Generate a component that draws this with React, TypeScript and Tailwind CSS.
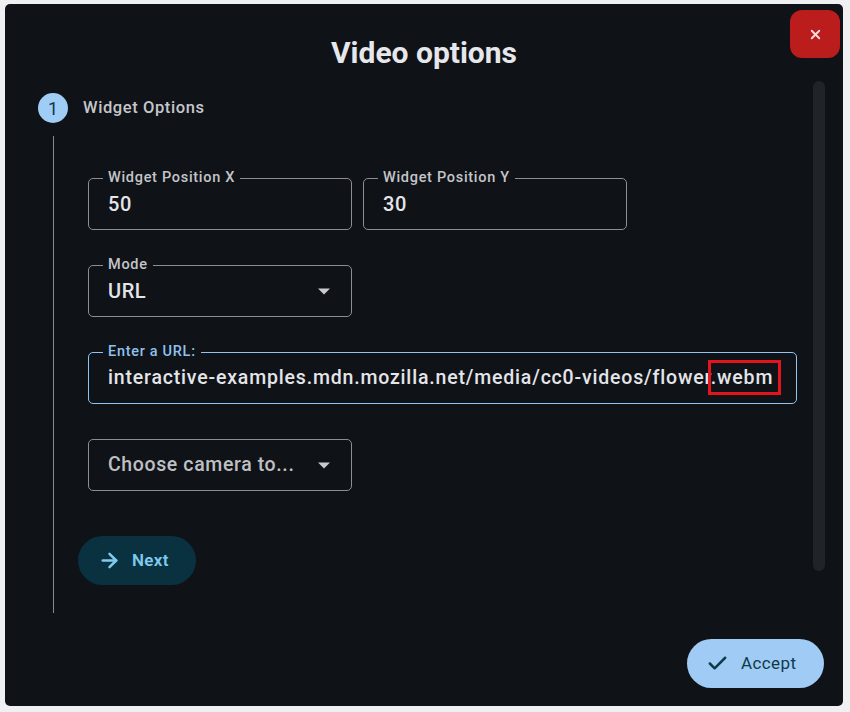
import React from 'react';
import { ArrowRight, Check, X } from 'lucide-react';

const font = { fontFamily: 'Roboto, "Liberation Sans", sans-serif' };

const Caret: React.FC = () => (
  <svg width="14" height="7" viewBox="0 0 14 7" className="shrink-0">
    <path d="M1 0.5 L13 0.5 L7 6.5 Z" fill="#c9cacd" />
  </svg>
);

const OutlinedField: React.FC<{
  label?: string;
  width: string;
  focused?: boolean;
  children: React.ReactNode;
}> = ({ label, width, focused = false, children }) => (
  <div
    className={`relative h-[52px] ${width} rounded-[5px] border flex items-center pl-[19px] pr-[20px] ${
      focused ? 'border-[#90c3f0] border-[1.5px]' : 'border-[#8d8e92]'
    }`}
  >
    {label && (
      <span
        className={`absolute -top-[10px] left-[14px] px-[5px] bg-[#0f1217] text-[14.5px] leading-[18px] font-medium tracking-[0.7px] ${
          focused ? 'text-[#8fc1ee]' : 'text-[#c4c5c9]'
        }`}
      >
        {label}
      </span>
    )}
    {children}
  </div>
);

export default function App() {
  return (
    <div className="w-[850px] h-[712px] bg-[#eff0f2] pl-[5px] pt-[4px]" style={font}>
      <div className="relative w-[838px] h-[702px] bg-[#0f1217] rounded-[5px] flex flex-col overflow-hidden">
        <button className="absolute top-[6px] right-[3px] w-[50px] h-[48px] rounded-[12px] bg-[#bb1d1d] flex items-center justify-center">
          <X size={15} strokeWidth={3} color="#f6dede" />
        </button>
        <div className="absolute top-[77px] right-[18px] w-[12px] h-[490px] rounded-full bg-[#202328]" />

        <h1 className="pt-[31px] text-center text-[30px] leading-[36px] font-bold text-[#e6e7eb]">
          Video options
        </h1>

        <div className="mt-[22px] pl-[33px] flex items-center gap-[15px]">
          <div className="w-[30px] h-[30px] rounded-full bg-[#a0cdf6] flex items-center justify-center text-[18px] text-[#133447]">
            1
          </div>
          <span className="text-[16.5px] font-medium text-[#c5c6ca] tracking-[0.6px]">Widget Options</span>
        </div>

        <div className="ml-[48px] mt-[13px] border-l border-[#8a8b8f] pl-[34px] pt-[42px] pb-[28px] flex flex-col">
          <div className="flex gap-[11px]">
            <OutlinedField label="Widget Position X" width="w-[264px]">
              <span className="text-[20px] font-medium text-[#e4e5e9] tracking-[0.6px]">50</span>
            </OutlinedField>
            <OutlinedField label="Widget Position Y" width="w-[264px]">
              <span className="text-[20px] font-medium text-[#e4e5e9] tracking-[0.6px]">30</span>
            </OutlinedField>
          </div>

          <div className="mt-[35px]">
            <OutlinedField label="Mode" width="w-[264px]">
              <span className="flex-1 text-[20px] font-medium text-[#e4e5e9] tracking-[0.6px]">URL</span>
              <Caret />
            </OutlinedField>
          </div>

          <div className="mt-[35px]">
            <OutlinedField label="Enter a URL:" width="w-[709px]" focused>
              <span className="text-[19.5px] font-medium text-[#e4e5e9] whitespace-nowrap tracking-[0.82px]">
                interactive-examples.mdn.mozilla.net/media/cc0-videos/flower
                <span className="relative">
                  .webm
                  <span className="absolute -top-[6px] -bottom-[6px] -left-[3px] -right-[8px] border-[3px] border-[#e3141c]" />
                </span>
              </span>
            </OutlinedField>
          </div>

          <div className="mt-[35px]">
            <OutlinedField width="w-[264px]">
              <span className="flex-1 text-[19.5px] font-medium text-[#bfc0c4] tracking-[0.62px]">Choose camera to...</span>
              <Caret />
            </OutlinedField>
          </div>

          <button className="mt-[45px] -ml-[10px] w-[118px] h-[49px] rounded-full bg-[#0a3140] flex items-center pl-[20px] gap-[11px]">
            <ArrowRight size={23} strokeWidth={2.6} color="#7fcbed" />
            <span className="text-[17px] font-semibold text-[#7fcbed] tracking-[0.3px]">Next</span>
          </button>
        </div>

        <div className="flex justify-end pr-[19px] mt-[26px]">
          <button className="w-[137px] h-[49px] rounded-full bg-[#a0cbf5] flex items-center pl-[19px] gap-[12px]">
            <Check size={23} strokeWidth={2.6} color="#0f3a4a" />
            <span className="text-[17px] text-[#0f3a4a] tracking-[0.4px]">Accept</span>
          </button>
        </div>
      </div>
    </div>
  );
}
